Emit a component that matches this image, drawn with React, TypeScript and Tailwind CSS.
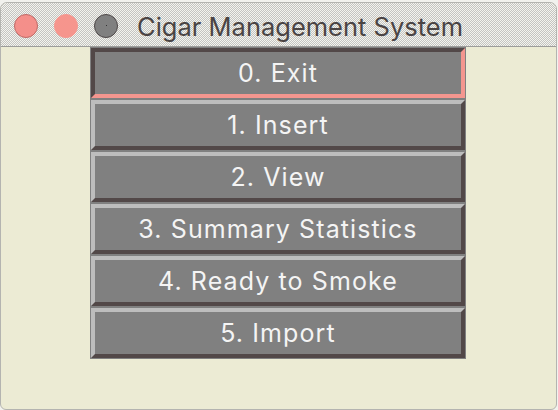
import React from 'react';

const items = ['0. Exit', '1. Insert', '2. View', '3. Summary Statistics', '4. Ready to Smoke', '5. Import'];

function TrafficLight({ color, ring, dot }: { color: string; ring: string; dot?: boolean }) {
  return (
    <div className={`w-6 h-6 rounded-full border flex items-center justify-center ${color} ${ring}`}>
      {dot && <div className="w-px h-px bg-[#333]" />}
    </div>
  );
}

export default function App() {
  return (
    <div className="w-[558px] h-[410px] bg-[#f2f2ee] overflow-hidden" style={{ fontFamily: 'Inter, "Liberation Sans", sans-serif' }}>
      <div className="w-[557px] h-[408px] mt-[2px] rounded-t-[7px] rounded-b-[6px] border border-[#b4b4b0] bg-[#ecebd4] flex flex-col overflow-hidden">
        {/* Title bar */}
        <div className="h-[44px] shrink-0 flex items-center border-b border-[#9c9c9a] bg-[repeating-conic-gradient(#c4c4c2_0%_25%,#f4f4ee_0%_50%)] bg-[length:2px_2px]">
          <div className="flex items-center gap-4 pl-[13px] pt-[2px]">
            <TrafficLight color="bg-[#f48f8a]" ring="border-[#c06a66]" />
            <TrafficLight color="bg-[#f6958d]" ring="border-[#f6958d]" />
            <TrafficLight color="bg-[#808080]" ring="border-[#4e4848]" dot />
          </div>
          <div className="ml-[19px] pt-[4px] text-[25.5px] leading-none text-[#4a4444]">Cigar Management System</div>
        </div>

        {/* Menu */}
        <div className="pl-[89px]">
          <div className="w-[376px] bg-[#808080] flex flex-col">
            {items.map((label, i) => (
              <div key={label} className="h-[52px] p-px">
                <div
                  className={
                    i === 0
                      ? 'h-full border-4 border-t-[#524848] border-l-[#524848] border-b-[#f4968f] border-r-[#f4968f] bg-[#808080] flex items-center justify-center'
                      : 'h-full border-4 border-t-[#bdbdbd] border-l-[#bdbdbd] border-b-[#524848] border-r-[#524848] bg-[#808080] flex items-center justify-center'
                  }
                >
                  <span className="text-[25px] leading-none text-[#f4f4f4] tracking-[1.1px]">{label}</span>
                </div>
              </div>
            ))}
          </div>
        </div>
      </div>
    </div>
  );
}
